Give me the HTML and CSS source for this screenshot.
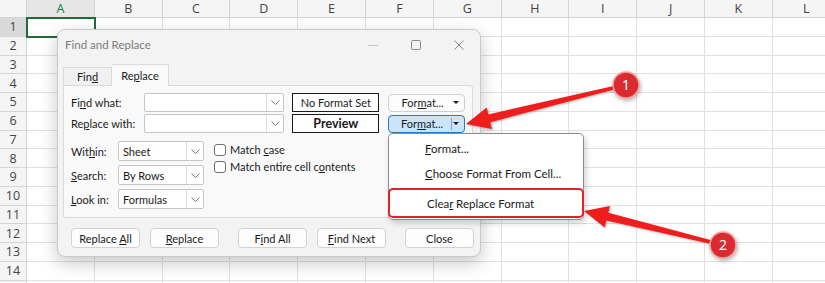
FILE: index.html
```html
<!DOCTYPE html>
<html lang="en">
<head>
    <meta charset="UTF-8">
    <title>Find and Replace</title>
    <link rel="stylesheet" href="styles.css">
</head>
<body>
    <div class="sheet">
        <table class="grid">
            <colgroup>
                <col class="col-rh">
                <col class="col"><col class="col"><col class="col"><col class="col"><col class="col"><col class="col">
                <col class="col"><col class="col"><col class="col"><col class="col"><col class="col"><col class="col">
            </colgroup>
            <tr class="head">
                <th class="corner"></th>
                <th class="sel">A</th><th>B</th><th>C</th><th>D</th><th>E</th><th>F</th>
                <th>G</th><th>H</th><th>I</th><th>J</th><th>K</th><th>L</th>
            </tr>
            <tr><th class="sel">1</th><td class="active"></td><td></td><td></td><td></td><td></td><td></td><td></td><td></td><td></td><td></td><td></td><td></td></tr>
            <tr><th>2</th><td></td><td></td><td></td><td></td><td></td><td></td><td></td><td></td><td></td><td></td><td></td><td></td></tr>
            <tr><th>3</th><td></td><td></td><td></td><td></td><td></td><td></td><td></td><td></td><td></td><td></td><td></td><td></td></tr>
            <tr><th>4</th><td></td><td></td><td></td><td></td><td></td><td></td><td></td><td></td><td></td><td></td><td></td><td></td></tr>
            <tr><th>5</th><td></td><td></td><td></td><td></td><td></td><td></td><td></td><td></td><td></td><td></td><td></td><td></td></tr>
            <tr><th>6</th><td></td><td></td><td></td><td></td><td></td><td></td><td></td><td></td><td></td><td></td><td></td><td></td></tr>
            <tr><th>7</th><td></td><td></td><td></td><td></td><td></td><td></td><td></td><td></td><td></td><td></td><td></td><td></td></tr>
            <tr><th>8</th><td></td><td></td><td></td><td></td><td></td><td></td><td></td><td></td><td></td><td></td><td></td><td></td></tr>
            <tr><th>9</th><td></td><td></td><td></td><td></td><td></td><td></td><td></td><td></td><td></td><td></td><td></td><td></td></tr>
            <tr><th>10</th><td></td><td></td><td></td><td></td><td></td><td></td><td></td><td></td><td></td><td></td><td></td><td></td></tr>
            <tr><th>11</th><td></td><td></td><td></td><td></td><td></td><td></td><td></td><td></td><td></td><td></td><td></td><td></td></tr>
            <tr><th>12</th><td></td><td></td><td></td><td></td><td></td><td></td><td></td><td></td><td></td><td></td><td></td><td></td></tr>
            <tr><th>13</th><td></td><td></td><td></td><td></td><td></td><td></td><td></td><td></td><td></td><td></td><td></td><td></td></tr>
            <tr><th>14</th><td></td><td></td><td></td><td></td><td></td><td></td><td></td><td></td><td></td><td></td><td></td><td></td></tr>
            <tr><th></th><td></td><td></td><td></td><td></td><td></td><td></td><td></td><td></td><td></td><td></td><td></td><td></td></tr>
        </table>

        <!-- Find and Replace dialog -->
        <div class="dialog">
            <div class="titlebar">
                <span class="title">Find and Replace</span>
                <div class="win-controls">
                    <span class="win-btn"><svg width="10" height="10" viewBox="0 0 10 10"><path d="M0 5.5h10" stroke="#c4c4c4" stroke-width="1"/></svg></span>
                    <span class="win-btn"><svg width="10" height="10" viewBox="0 0 10 10"><rect x="0.5" y="0.5" width="9" height="9" rx="1" fill="none" stroke="#8a8a8a"/></svg></span>
                    <span class="win-btn"><svg width="10" height="10" viewBox="0 0 10 10"><path d="M0.5 0.5l9 9M9.5 0.5l-9 9" stroke="#8a8a8a" stroke-width="1"/></svg></span>
                </div>
            </div>

            <div class="tabs">
                <div class="tab"><span>Fin<u>d</u></span></div>
                <div class="tab active"><span>Re<u>p</u>lace</span></div>
            </div>

            <div class="panel">
                <div class="field-row">
                    <label class="field-label">Fi<u>n</u>d what:</label>
                    <div class="combo">
                        <span class="combo-text"></span>
                        <span class="chev"><svg width="9" height="5" viewBox="0 0 9 5"><path d="M0.5 0.5l4 4 4-4" fill="none" stroke="#7a7a7a"/></svg></span>
                    </div>
                    <div class="fmt-box">No Format Set</div>
                    <div class="fmt-btn">
                        <span class="fmt-label">For<u>m</u>at...</span>
                        <span class="caret"></span>
                    </div>
                </div>
                <div class="field-row">
                    <label class="field-label">Re<u>p</u>lace with:</label>
                    <div class="combo">
                        <span class="combo-text"></span>
                        <span class="chev"><svg width="9" height="5" viewBox="0 0 9 5"><path d="M0.5 0.5l4 4 4-4" fill="none" stroke="#7a7a7a"/></svg></span>
                    </div>
                    <div class="fmt-box preview">Preview</div>
                    <div class="fmt-btn pressed">
                        <span class="fmt-label">For<u>m</u>at...</span>
                        <span class="caret"></span>
                    </div>
                </div>

                <div class="options">
                    <div class="selects">
                        <div class="select-row">
                            <label class="opt-label">Wit<u>h</u>in:</label>
                            <div class="select"><span class="select-text">Sheet</span><span class="chev"><svg width="9" height="5" viewBox="0 0 9 5"><path d="M0.5 0.5l4 4 4-4" fill="none" stroke="#7a7a7a"/></svg></span></div>
                        </div>
                        <div class="select-row">
                            <label class="opt-label"><u>S</u>earch:</label>
                            <div class="select"><span class="select-text">By Rows</span><span class="chev"><svg width="9" height="5" viewBox="0 0 9 5"><path d="M0.5 0.5l4 4 4-4" fill="none" stroke="#7a7a7a"/></svg></span></div>
                        </div>
                        <div class="select-row">
                            <label class="opt-label"><u>L</u>ook in:</label>
                            <div class="select"><span class="select-text">Formulas</span><span class="chev"><svg width="9" height="5" viewBox="0 0 9 5"><path d="M0.5 0.5l4 4 4-4" fill="none" stroke="#7a7a7a"/></svg></span></div>
                        </div>
                    </div>
                    <div class="checks">
                        <div class="check-row"><span class="checkbox"></span><span>Match <u>c</u>ase</span></div>
                        <div class="check-row"><span class="checkbox"></span><span>Match entire cell c<u>o</u>ntents</span></div>
                    </div>
                </div>
            </div>

            <div class="actions">
                <div class="btn"><span>Replace <u>A</u>ll</span></div>
                <div class="btn"><span><u>R</u>eplace</span></div>
                <div class="btn wide-gap"><span>F<u>i</u>nd All</span></div>
                <div class="btn"><span><u>F</u>ind Next</span></div>
                <div class="btn wide-gap"><span>Close</span></div>
            </div>
        </div>

        <!-- Format dropdown menu -->
        <div class="menu">
            <div class="menu-item"><span><u>F</u>ormat...</span></div>
            <div class="menu-item"><span><u>C</u>hoose Format From Cell...</span></div>
            <div class="menu-item highlight"><span>Clea<u>r</u> Replace Format</span></div>
        </div>

        <!-- Callout arrows -->
        <svg class="callouts" width="825" height="283" viewBox="0 0 825 283">
            <polygon class="arrow" points="466,124 486.7,107.6 488.3,114.4 624.6,83.5 625.4,86.5 490.3,122.2 491.9,129"/>
            <polygon class="arrow" points="584,211 609.9,206 608.3,212.8 723.4,243.5 722.6,246.5 606.3,220.6 604.7,227.4"/>
            <circle class="badge" cx="626" cy="85" r="13"/>
            <text class="badge-num" x="626" y="90">1</text>
            <circle class="badge" cx="723" cy="245" r="13"/>
            <text class="badge-num" x="723" y="250">2</text>
        </svg>
    </div>
</body>
</html>
```

FILE: styles.css
```css
* {
    margin: 0;
    padding: 0;
    box-sizing: border-box;
}

body {
    width: 825px;
    height: 283px;
    overflow: hidden;
    background: #fff;
    font-family: "Noto Sans", "Open Sans", sans-serif;
}

.sheet {
    position: relative;
    width: 825px;
    height: 283px;
    overflow: hidden;
}

/* Spreadsheet grid */
.grid {
    border-collapse: separate;
    border-spacing: 0;
    table-layout: fixed;
    width: 840.6px;
}

.col-rh {
    width: 27px;
}

.col {
    width: 67.8px;
}

.grid th,
.grid td {
    height: 18.75px;
    border-right: 1px solid #e1e1e1;
    border-bottom: 1px solid #e1e1e1;
    padding: 0;
}

.grid th {
    background: #f5f5f5;
    color: #444;
    font-family: "Open Sans", sans-serif;
    font-weight: 400;
    font-size: 12.5px;
    text-align: center;
    border-color: #d4d4d4;
}

.grid .head th {
    height: 18px;
}

.grid th.sel {
    background: #d9d9d9;
}

.grid .head th.sel {
    background: #e6e6e6;
    color: #107c41;
}

.grid td.active {
    outline: 2px solid #1e6b3e;
    outline-offset: -1px;
}

/* Dialog window */
.dialog {
    position: absolute;
    left: 57px;
    top: 29px;
    width: 424px;
    height: 228px;
    background: #f3f3f3;
    border: 1px solid #c9c9c9;
    border-radius: 8px;
    box-shadow: 0 6px 18px rgba(0, 0, 0, 0.22);
    font-family: "Lato", "Noto Sans", sans-serif;
    font-size: 11px;
    color: #1a1a1a;
}

.titlebar {
    height: 29px;
    display: flex;
    align-items: center;
    justify-content: space-between;
    padding-left: 7px;
}

.title {
    color: #7a7a7a;
    font-size: 11.5px;
}

.win-controls {
    display: flex;
}

.win-btn {
    width: 43px;
    height: 29px;
    display: flex;
    align-items: center;
    justify-content: center;
}

.tabs {
    display: flex;
    align-items: flex-end;
    height: 26px;
    margin-left: 5px;
}

.tab {
    width: 49px;
    height: 18px;
    border: 1px solid #dadada;
    border-bottom: none;
    background: #f0f0f0;
    display: flex;
    align-items: center;
    justify-content: center;
}

.tab.active {
    width: 57px;
    height: 22px;
    background: #f9f9f9;
    position: relative;
    margin-bottom: -1px;
    border-left: none;
}

.panel {
    margin: 0 7px 0 5px;
    height: 133px;
    background: #f9f9f9;
    border: 1px solid #dadada;
    border-radius: 0 3px 3px 3px;
    padding: 7px 7px 6px 7px;
}

.field-row {
    display: flex;
    align-items: center;
    height: 19px;
    margin-bottom: 2px;
}

.field-label {
    width: 73px;
}

.combo,
.select {
    display: flex;
    height: 19px;
    background: #fff;
    border: 1px solid #c6c6c6;
    border-radius: 2px;
}

.combo {
    width: 141px;
}

.combo-text,
.select-text {
    flex: 1;
    display: flex;
    align-items: center;
    padding-left: 4px;
}

.chev {
    width: 17px;
    border-left: 1px solid #dedede;
    display: flex;
    align-items: center;
    justify-content: center;
}

.fmt-box {
    width: 87px;
    height: 19px;
    margin-left: 8px;
    background: #fff;
    border: 1px solid #1a1a1a;
    display: flex;
    align-items: center;
    justify-content: center;
}

.fmt-box.preview {
    font-weight: 700;
    font-size: 12.5px;
}

.fmt-btn {
    width: 77px;
    height: 18px;
    margin-left: 9px;
    background: #fdfdfd;
    border: 1px solid #d0d0d0;
    border-radius: 4px;
    display: flex;
    align-items: center;
}

.fmt-label {
    flex: 1;
    text-align: center;
    padding-left: 4px;
}

.caret {
    width: 9px;
    height: 100%;
    margin-right: 3px;
    display: flex;
    align-items: center;
    justify-content: center;
}

.caret::after {
    content: "";
    border-left: 3px solid transparent;
    border-right: 3px solid transparent;
    border-top: 3px solid #1a1a1a;
}

.fmt-btn.pressed {
    background: #cce4f7;
    border-color: #2b7cc4;
}

.fmt-btn.pressed .caret {
    border-left: 1px solid #7fa8cc;
    width: 10px;
    height: 12px;
}

.options {
    display: flex;
    margin-top: 8px;
}

.selects {
    display: flex;
    flex-direction: column;
    gap: 4px;
}

.select-row {
    display: flex;
    align-items: center;
}

.opt-label {
    width: 47px;
}

.select {
    width: 86px;
    height: 20px;
}

.checks {
    margin-left: 10px;
}

.check-row {
    display: flex;
    align-items: center;
    height: 17px;
}

.checkbox {
    width: 12px;
    height: 12px;
    border: 1px solid #6f6f6f;
    border-radius: 3px;
    background: #fff;
    margin-right: 4px;
}

.actions {
    display: flex;
    gap: 10px;
    padding: 10px 0 0 13px;
}

.btn {
    width: 69px;
    height: 20px;
    background: #fdfdfd;
    border: 1px solid #d3d3d3;
    border-radius: 4px;
    display: flex;
    align-items: center;
    justify-content: center;
}

.btn.wide-gap {
    margin-left: 9px;
}

/* Dropdown menu */
.menu {
    position: absolute;
    left: 388px;
    top: 133px;
    width: 196px;
    height: 87px;
    background: #fff;
    border: 1px solid #8c8c8c;
    border-radius: 5px;
    box-shadow: 2px 3px 6px rgba(0, 0, 0, 0.18);
    padding-top: 2px;
    font-family: "Lato", "Noto Sans", sans-serif;
    font-size: 11.5px;
    color: #1a1a1a;
}

.menu-item {
    height: 25px;
    padding-left: 36px;
    display: flex;
    align-items: center;
}

.menu-item.highlight {
    margin: 2px -1px 0 -1px;
    height: 30px;
    padding-left: 37px;
    border: 2px solid #e0222b;
    border-radius: 5px;
}

/* Red callouts */
.callouts {
    position: absolute;
    left: 0;
    top: 0;
    pointer-events: none;
}

.arrow {
    fill: #f01d1d;
    filter: drop-shadow(1px 1px 1px rgba(0, 0, 0, 0.3));
}

.badge {
    fill: #dc2b30;
    stroke: #f4a3a3;
    stroke-width: 1.5;
    filter: drop-shadow(1px 2px 2px rgba(0, 0, 0, 0.3));
}

.badge-num {
    fill: #fff;
    font-family: "Noto Sans", sans-serif;
    font-size: 14px;
    text-anchor: middle;
}
```
